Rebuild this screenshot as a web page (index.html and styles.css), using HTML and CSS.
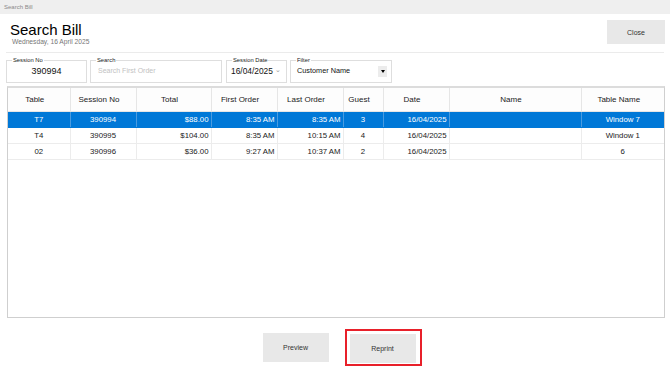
FILE: index.html
```html
<!DOCTYPE html>
<html>
<head>
<meta charset="utf-8">
<link rel="stylesheet" href="styles.css">
</head>
<body>
<div class="titlebar">Search Bill</div>

<div class="header">
	<div class="heading">
		<h1>Search Bill</h1>
		<div class="today">Wednesday, 16 April 2025</div>
	</div>
	<button class="btn close">Close</button>
</div>

<div class="fields">
	<fieldset class="field f-session">
		<legend>Session No</legend>
		<div class="value center">390994</div>
	</fieldset>
	<fieldset class="field f-search">
		<legend>Search</legend>
		<div class="value placeholder">Search First Order</div>
	</fieldset>
	<fieldset class="field f-date">
		<legend>Session Date</legend>
		<div class="value date">16/04/2025 <span class="chev">&#8964;</span></div>
	</fieldset>
	<fieldset class="field f-filter">
		<legend>Filter</legend>
		<div class="value select">Customer Name <span class="drop"><svg width="4" height="3" viewBox="0 0 4 3"><path d="M0 0H4L2 3Z" fill="#000"/></svg></span></div>
	</fieldset>
</div>

<div class="grid">
	<table>
		<colgroup>
			<col style="width:62px"><col style="width:66px"><col style="width:75px">
			<col style="width:66px"><col style="width:66px"><col style="width:40px">
			<col style="width:66px"><col style="width:132px"><col style="width:83px">
		</colgroup>
		<thead>
			<tr>
				<th>Table</th><th>Session No</th><th>Total</th><th>First Order</th><th>Last Order</th>
				<th>Guest</th><th>Date</th><th>Name</th><th>Table Name</th>
			</tr>
		</thead>
		<tbody>
			<tr class="selected">
				<td class="c">T7</td><td class="c">390994</td><td class="r">$88.00</td><td class="r">8:35 AM</td><td class="r">8:35 AM</td>
				<td class="c">3</td><td class="r">16/04/2025</td><td></td><td class="c">Window 7</td>
			</tr>
			<tr>
				<td class="c">T4</td><td class="c">390995</td><td class="r">$104.00</td><td class="r">8:35 AM</td><td class="r">10:15 AM</td>
				<td class="c">4</td><td class="r">16/04/2025</td><td></td><td class="c">Window 1</td>
			</tr>
			<tr>
				<td class="c">02</td><td class="c">390996</td><td class="r">$36.00</td><td class="r">9:27 AM</td><td class="r">10:37 AM</td>
				<td class="c">2</td><td class="r">16/04/2025</td><td></td><td class="c">6</td>
			</tr>
		</tbody>
	</table>
</div>

<div class="footer">
	<button class="btn action">Preview</button>
	<span class="focus"><button class="btn action">Reprint</button></span>
</div>
</body>
</html>
```

FILE: styles.css
```css
* { box-sizing: border-box }

body {
	margin: 0;
	width: 670px;
	height: 376px;
	background: #fff;
	font-family: "Liberation Sans", Arial, sans-serif;
	color: #222;
	overflow: hidden;
}

.titlebar {
	height: 14px;
	line-height: 14px;
	padding-left: 4px;
	background: #efefef;
	color: #8a8a8a;
	font-size: 6px;
}

.header {
	display: flex;
	justify-content: space-between;
	align-items: flex-start;
	height: 39px;
	margin: 0 6px;
	padding: 6px 0 0 4px;
	border-bottom: 1px solid #ebebeb;
}

h1 {
	margin: 1px 0 0;
	font-size: 15px;
	line-height: 17px;
	font-weight: normal;
	color: #000;
}

.today {
	margin-left: 2px;
	font-size: 6.7px;
	line-height: 8px;
	color: #777;
}

.btn {
	border: 0;
	background: #e8e8e8;
	font-family: inherit;
	color: #333;
	font-size: 7px;
	padding: 0;
}

.close {
	width: 58px;
	height: 24px;
	margin-right: -1px;
}

.fields {
	display: flex;
	gap: 3px;
	margin-top: 4px;
	padding-left: 6px;
}

.field {
	margin: 0;
	padding: 0 4px;
	height: 26px;
	border: 1px solid #dedede;
}

.field legend {
	padding: 0 1px;
	margin-left: 1px;
	font-size: 5.8px;
	line-height: 6px;
	color: #222;
}

.f-session { width: 81px }
.f-search { width: 132px; margin-left: 0 }
.f-date { width: 61px; margin-left: 1px }
.f-filter { width: 102px }

.value {
	line-height: 16px;
	white-space: nowrap;
}

.center { text-align: center; font-size: 9px; color: #111 }
.placeholder { font-size: 7px; color: #c2c2c2; padding-left: 3px }
.date { font-size: 8.4px; color: #111; padding-left: 0 }
.chev { font-size: 7px; color: #999; position: relative; top: -2px }

.select {
	display: flex;
	align-items: center;
	justify-content: space-between;
	font-size: 7.3px;
	color: #111;
	padding-left: 2px;
}

.drop {
	display: flex;
	align-items: center;
	justify-content: center;
	width: 9px;
	height: 11px;
	background: #ececec;
}

.grid {
	width: 658px;
	height: 232px;
	margin: 3px 0 0 7px;
	border: 1px solid #cfcfcf;
	border-top: 2px solid #dcdcdc;
}

table {
	width: 656px;
	table-layout: fixed;
	border-collapse: collapse;
}

th {
	height: 23px;
	font-size: 8px;
	font-weight: normal;
	color: #222;
	text-align: center;
	padding: 0 8px 0 0;
	border-left: 1px solid #e6e6e6;
	border-bottom: 1px solid #e6e6e6;
	background: #fdfdfd;
}

th:first-child, td:first-child { border-left: 0 }

td {
	height: 16px;
	padding: 0 2px;
	font-size: 7.8px;
	color: #222;
	border-left: 1px solid #ececec;
	border-bottom: 1px solid #ececec;
	white-space: nowrap;
}

td.c { text-align: center }
td.r { text-align: right }

tr.selected td {
	background: #0078d7;
	color: #fff;
	border-left-color: #4a9be0;
	border-bottom-color: #0078d7;
}

.footer {
	display: flex;
	justify-content: center;
	align-items: center;
	gap: 16px;
	margin-top: 11px;
	padding-left: 14px;
}

.action {
	width: 66px;
	height: 29px;
}

.focus {
	display: flex;
	padding: 3px 4px 1px 3px;
	border: 2px solid #e8202a;
}
```
